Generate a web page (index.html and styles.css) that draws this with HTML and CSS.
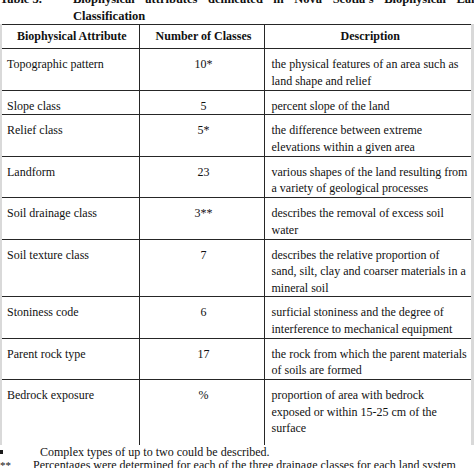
FILE: index.html
```html
<!DOCTYPE html>
<html>
<head>
<meta charset="utf-8">
<link rel="stylesheet" href="styles.css">
</head>
<body>
<div class="page">
  <div class="title">
    <div class="title-label">Table 3.</div>
    <div class="title-text">Biophysical attributes delineated in Nova Scotia's Biophysical Land Classification</div>
  </div>
  <table class="attr">
    <colgroup>
      <col class="col1">
      <col class="col2">
      <col class="col3">
    </colgroup>
    <tr class="head">
      <th class="c1">Biophysical Attribute</th>
      <th class="c2">Number of Classes</th>
      <th class="c3">Description</th>
    </tr>
    <tr class="h2">
      <td class="c1">Topographic pattern</td>
      <td class="c2">10*</td>
      <td class="c3">the physical features of an area such as<br>land shape and relief</td>
    </tr>
    <tr class="h1b">
      <td class="c1">Slope class</td>
      <td class="c2">5</td>
      <td class="c3">percent slope of the land</td>
    </tr>
    <tr class="h2">
      <td class="c1">Relief class</td>
      <td class="c2">5*</td>
      <td class="c3">the difference between extreme<br>elevations within a given area</td>
    </tr>
    <tr class="h2">
      <td class="c1">Landform</td>
      <td class="c2">23</td>
      <td class="c3">various shapes of the land resulting from<br>a variety of geological processes</td>
    </tr>
    <tr class="h2">
      <td class="c1">Soil drainage class</td>
      <td class="c2">3**</td>
      <td class="c3">describes the removal of excess soil<br>water</td>
    </tr>
    <tr class="h3">
      <td class="c1">Soil texture class</td>
      <td class="c2">7</td>
      <td class="c3">describes the relative proportion of<br>sand, silt, clay and coarser materials in a<br>mineral soil</td>
    </tr>
    <tr class="h2">
      <td class="c1">Stoniness code</td>
      <td class="c2">6</td>
      <td class="c3">surficial stoniness and the degree of<br>interference to mechanical equipment</td>
    </tr>
    <tr class="h2">
      <td class="c1">Parent rock type</td>
      <td class="c2">17</td>
      <td class="c3">the rock from which the parent materials<br>of soils are formed</td>
    </tr>
    <tr class="h3b">
      <td class="c1">Bedrock exposure</td>
      <td class="c2">%</td>
      <td class="c3">proportion of area with bedrock<br>exposed or within 15-25 cm of the<br>surface</td>
    </tr>
  </table>
  <div class="notes">
    <div class="note"><span class="mark mark-sq"></span><span class="note-text">Complex types of up to two could be described.</span></div>
    <div class="note"><span class="mark">**</span><span class="note-text">Percentages were determined for each of the three drainage classes for each land system</span></div>
  </div>
</div>
</body>
</html>
```
FILE: styles.css
```css
html, body {
  margin: 0;
  padding: 0;
  background: #ffffff;
}
body {
  font-family: "Liberation Serif", "Times New Roman", serif;
  color: #111111;
  font-size: 12px;
}
.page {
  width: 474px;
  height: 468px;
  overflow: hidden;
}
.title {
  display: flex;
  margin-top: -9px;
  font-weight: bold;
  font-size: 12.5px;
  line-height: 17px;
}
.title-label {
  width: 73px;
  flex: none;
}
.title-text {
  width: 412px;
  flex: none;
  text-align: justify;
}
.attr {
  border-collapse: collapse;
  table-layout: fixed;
  width: 474px;
  margin-top: -1px;
}
.col1 { width: 138px; }
.col2 { width: 125px; }
.attr th, .attr td {
  border-top: 1.5px solid #262626;
  border-bottom: 1.5px solid #262626;
  vertical-align: top;
  padding: 7px 2px 0 6px;
  line-height: 16.5px;
  font-size: 12px;
  text-align: left;
  white-space: nowrap;
  overflow: hidden;
}
.attr th {
  font-weight: bold;
  padding-top: 3px;
  text-align: center;
}
.attr .c1 {
  border-left: 2px solid #d9d9d9;
  border-right: 1.5px solid #262626;
  padding-left: 5px;
}
.attr .c2 {
  border-right: 1.5px solid #262626;
  text-align: center;
}
.attr .c3 {
  border-right: 3px solid #d9d9d9;
  padding-left: 7px;
}
.attr th.c1, .attr th.c2, .attr th.c3 {
  text-align: center;
}
.head { height: 24px; }
.h2 { height: 41.5px; }
.h1b { height: 24.5px; }
.h3 { height: 57px; }
.h3b { height: 65px; }
.attr tr:last-child td {
  border-bottom: none;
}
.notes {
  margin-top: 1px;
  line-height: 13px;
  font-size: 12px;
}
.note {
  display: flex;
  align-items: baseline;
}
.mark {
  flex: none;
  width: 33px;
  font-size: 11px;
}
.mark-sq {
  width: 3px;
  height: 4px;
  background: #1a1a1a;
  margin-right: 37px;
  align-self: center;
}
.note-text {
  white-space: nowrap;
}
```
